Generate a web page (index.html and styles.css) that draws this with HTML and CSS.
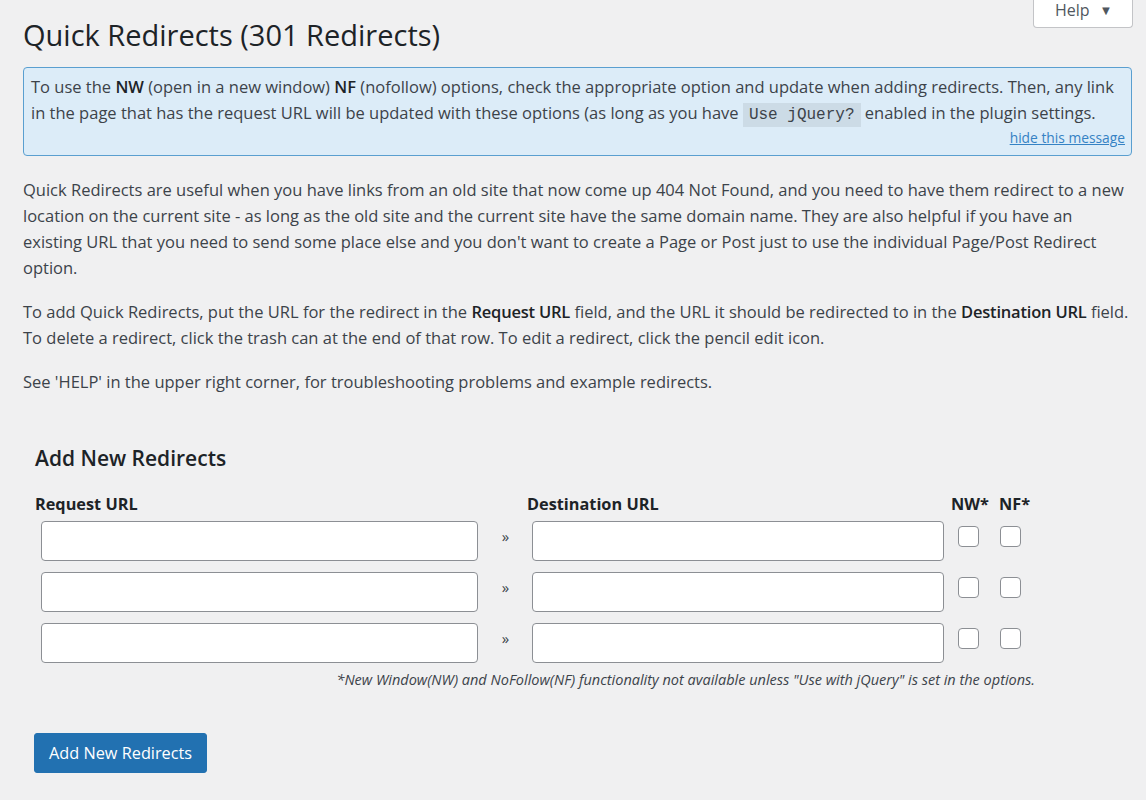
FILE: index.html
```html
<!DOCTYPE html>
<html lang="en">
<head>
<meta charset="utf-8">
<title>Quick Redirects (301 Redirects)</title>
<link rel="stylesheet" href="styles.css">
</head>
<body>
<div class="screen-meta-links">
  <button type="button" class="help-tab">Help <span class="help-arrow">&#9660;</span></button>
</div>
<div class="wrap">
  <h1 class="page-title">Quick Redirects (301 Redirects)</h1>

  <div class="notice">
    <p class="notice-text">To use the <strong>NW</strong> (open in a new window) <strong>NF</strong> (nofollow) options, check the appropriate option and update when adding redirects. Then, any link in the page that has the request URL will be updated with these options (as long as you have <code>Use jQuery?</code> enabled in the plugin settings.</p>
    <div class="notice-dismiss"><a href="#">hide this message</a></div>
  </div>

  <div class="intro">
    <p>Quick Redirects are useful when you have links from an old site that now come up 404 Not Found, and you need to have them redirect to a new location on the current site - as long as the old site and the current site have the same domain name. They are also helpful if you have an existing URL that you need to send some place else and you don't want to create a Page or Post just to use the individual Page/Post Redirect option.</p>
    <p>To add Quick Redirects, put the URL for the redirect in the <strong>Request URL</strong> field, and the URL it should be redirected to in the <strong>Destination URL</strong> field. To delete a redirect, click the trash can at the end of that row. To edit a redirect, click the pencil edit icon.</p>
    <p>See 'HELP' in the upper right corner, for troubleshooting problems and example redirects.</p>
  </div>

  <form class="redirect-card" action="#">
    <h2 class="card-title">Add New Redirects</h2>
    <div class="field-head">
      <span class="col-label">Request URL</span>
      <span></span>
      <span class="col-label">Destination URL</span>
      <span class="col-label">NW*</span>
      <span class="col-label">NF*</span>
    </div>
    <div class="field-rows">
      <input type="text" class="url-input req">
      <span class="sep">&raquo;</span>
      <input type="text" class="url-input dest">
      <span class="check nw"><input type="checkbox"></span>
      <span class="check nf"><input type="checkbox"></span>

      <input type="text" class="url-input req">
      <span class="sep">&raquo;</span>
      <input type="text" class="url-input dest">
      <span class="check nw"><input type="checkbox"></span>
      <span class="check nf"><input type="checkbox"></span>

      <input type="text" class="url-input req">
      <span class="sep">&raquo;</span>
      <input type="text" class="url-input dest">
      <span class="check nw"><input type="checkbox"></span>
      <span class="check nf"><input type="checkbox"></span>
    </div>
    <p class="footnote">*New Window(NW) and NoFollow(NF) functionality not available unless "Use with jQuery" is set in the options.</p>
    <button type="submit" class="button-primary">Add New Redirects</button>
  </form>
</div>
</body>
</html>
```

FILE: styles.css
```css
html, body {
  margin: 0;
  padding: 0;
}

body {
  background: #f0f0f1;
  color: #3c434a;
  font-family: "Open Sans", "Noto Sans", sans-serif;
  font-size: 16.5px;
  line-height: 26px;
}

/* Help tab in the top right corner */
.screen-meta-links {
  float: right;
  margin-right: 13px;
}

.help-tab {
  display: flex;
  align-items: flex-start;
  width: 100px;
  height: 28px;
  padding: 0 0 0 21px;
  margin: 0;
  background: #fff;
  border: 1px solid #c3c4c7;
  border-top: none;
  border-radius: 0 0 4px 4px;
  color: #50575e;
  font-family: "Open Sans", "Noto Sans", sans-serif;
  font-size: 16px;
  line-height: 20px;
  cursor: pointer;
}

.help-arrow {
  margin-left: 10px;
  font-size: 13px;
  line-height: 20px;
  color: #50575e;
}

.wrap {
  padding: 17px 14px 40px 23px;
}

.page-title {
  margin: 0;
  color: #1d2327;
  font-size: 29px;
  font-weight: 400;
  line-height: 36px;
}

/* Info notice */
.notice {
  margin-top: 14px;
  padding: 6px 6px 7px 7px;
  background: #dcecf8;
  border: 1px solid #5a9fd0;
  border-radius: 4px;
}

.notice-text {
  margin: 0;
  line-height: 26px;
}

.notice-text strong {
  color: #1d2327;
  font-weight: 600;
}

.notice-text code {
  padding: 3px 6px;
  background: rgba(0, 0, 0, 0.07);
  color: #3c434a;
  font-family: "Liberation Mono", "DejaVu Sans Mono", monospace;
  font-size: 16px;
}

.notice-dismiss {
  text-align: right;
  font-size: 13.8px;
  line-height: 20px;
}

.notice-dismiss a {
  color: #3582c4;
  text-decoration: underline;
}

/* Intro text */
.intro {
  margin-top: 21px;
  margin-right: 1px;
}

.intro p {
  margin: 0 0 18px;
}

.intro strong {
  color: #1d2327;
  font-weight: 600;
  letter-spacing: -0.2px;
}

/* Add redirects form */
.redirect-card {
  margin: 49px 0 0;
  padding-left: 12px;
}

.card-title {
  margin: 0;
  color: #1d2327;
  font-size: 21px;
  font-weight: 600;
  line-height: 28px;
}

.field-head,
.field-rows {
  display: grid;
  grid-template-columns: 449px 43px 424px 48px 40px;
}

.field-head {
  margin-top: 21px;
  margin-bottom: 6px;
}

.col-label {
  color: #1d2327;
  font-size: 16.3px;
  font-weight: 700;
  line-height: 22px;
}

.field-rows {
  row-gap: 11px;
  align-items: center;
}

.url-input {
  box-sizing: border-box;
  height: 40px;
  margin: 0;
  padding: 0 8px;
  background: #fff;
  border: 1px solid #8c8f94;
  border-radius: 4px;
  font-family: inherit;
  font-size: 15px;
}

.url-input.req {
  width: 437px;
  margin-left: 6px;
}

.url-input.dest {
  width: 412px;
  margin-left: 5px;
}

.sep {
  justify-self: center;
  font-size: 15px;
  line-height: 16px;
  color: #3c434a;
  margin-top: -10px;
}

.check {
  display: flex;
  align-self: start;
  padding-top: 5px;
}

.check.nw {
  padding-left: 7px;
}

.check.nf {
  padding-left: 1px;
}

.check input {
  -webkit-appearance: none;
  appearance: none;
  box-sizing: border-box;
  width: 21px;
  height: 21px;
  margin: 0;
  background: #fff;
  border: 1px solid #8c8f94;
  border-radius: 4px;
}

.footnote {
  width: 1000px;
  margin: 7px 0 0;
  text-align: right;
  font-size: 14.5px;
  font-style: italic;
  line-height: 20px;
  color: #3c434a;
}

.button-primary {
  margin-top: 43px;
  margin-left: -1px;
  height: 40px;
  padding: 0 14px;
  background: #2271b1;
  border: 1px solid #2271b1;
  border-radius: 3px;
  color: #fff;
  font-family: inherit;
  font-size: 16.3px;
  line-height: 38px;
  cursor: pointer;
}
```
